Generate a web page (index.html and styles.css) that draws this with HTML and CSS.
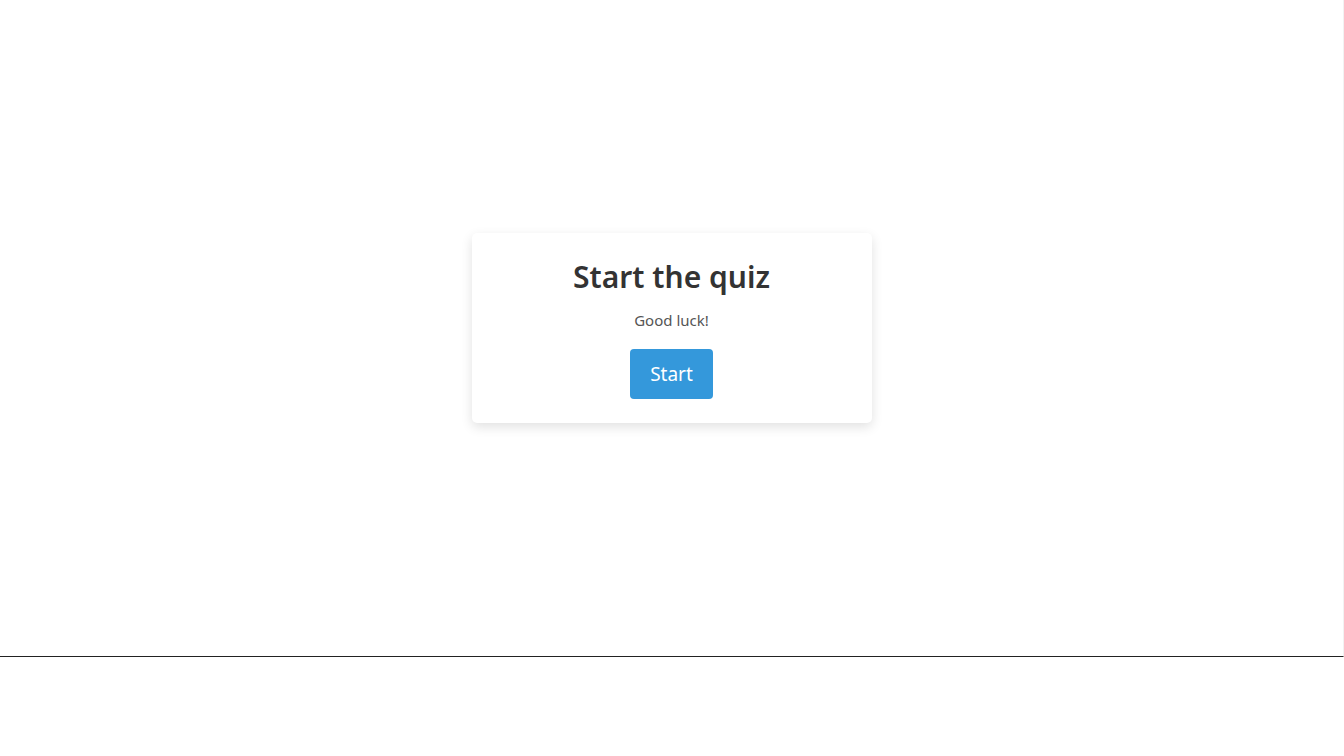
FILE: index.html
```html
<!DOCTYPE html>
<html lang="en">
<head>
<meta charset="utf-8">
<title>Quiz</title>
<link rel="stylesheet" href="styles.css">
</head>
<body>
<div class="stage">
  <div class="card">
    <h1 class="title">Start the quiz</h1>
    <p class="sub">Good luck!</p>
    <button class="btn" type="button">Start</button>
  </div>
</div>
</body>
</html>
```

FILE: styles.css
```css
html, body {
  margin: 0;
  padding: 0;
  background: #fff;
}
body {
  font-family: "Noto Sans", "Open Sans", sans-serif;
  color: #333;
}
.stage {
  box-sizing: border-box;
  width: 1344px;
  height: 657px;
  border-bottom: 1px solid #222;
  border-right: 1px solid #f2f2f2;
  display: flex;
  align-items: center;
  justify-content: center;
}
.card {
  box-sizing: border-box;
  width: 400px;
  height: 190px;
  background: #fff;
  border-radius: 5px;
  box-shadow: 0 4px 12px rgba(0,0,0,0.12);
  display: flex;
  flex-direction: column;
  align-items: center;
  padding-top: 20px;
}
.title {
  margin: 0;
  font-size: 30px;
  font-weight: 600;
  line-height: 48px;
  color: #333;
}
.sub {
  margin: 9px 0 0;
  font-size: 15px;
  line-height: 20px;
  color: #555;
}
.btn {
  margin-top: 19px;
  width: 83px;
  height: 50px;
  border: none;
  border-radius: 4px;
  background: #3498db;
  color: #fff;
  font-family: inherit;
  font-size: 19px;
  padding: 0;
}
```
